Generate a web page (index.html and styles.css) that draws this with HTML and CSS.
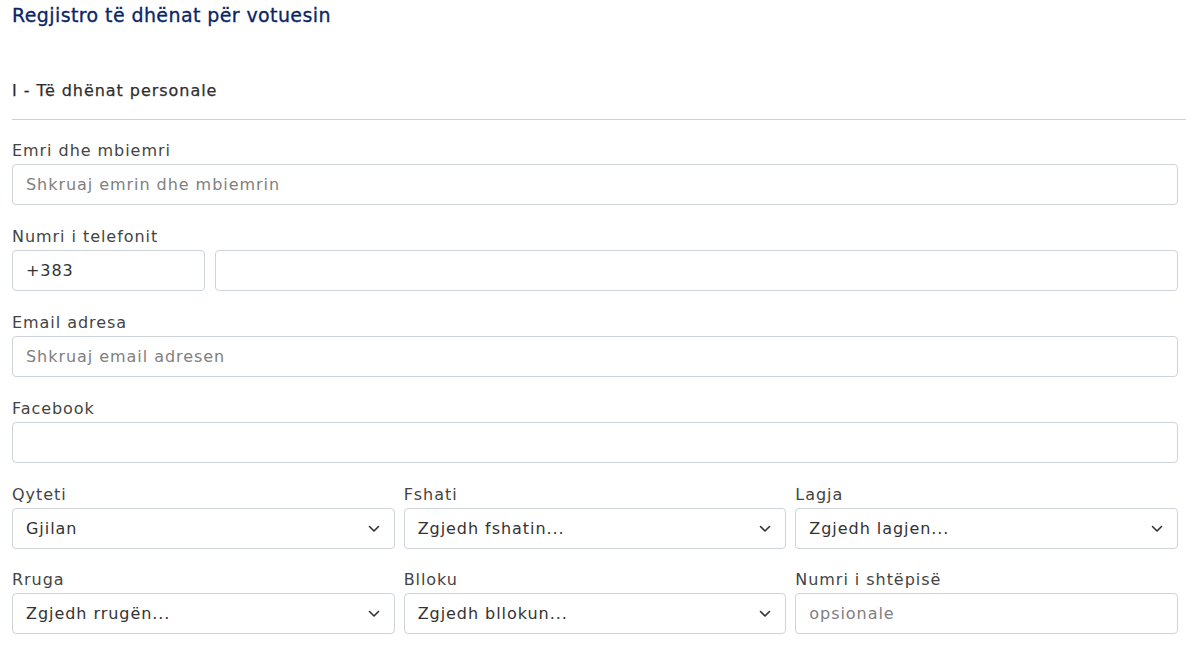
FILE: index.html
```html
<!DOCTYPE html>
<html lang="sq">
<head>
<meta charset="utf-8">
<title>Regjistro votuesin</title>
<link rel="stylesheet" href="styles.css">
</head>
<body>
<div class="page">
  <h1 class="title">Regjistro të dhënat për votuesin</h1>
  <h2 class="section">I - Të dhënat personale</h2>
  <hr class="divider">
  <form class="form">
    <div class="group">
      <label class="label">Emri dhe mbiemri</label>
      <div class="control placeholder">Shkruaj emrin dhe mbiemrin</div>
    </div>
    <div class="group">
      <label class="label">Numri i telefonit</label>
      <div class="phone">
        <div class="control code">+383</div>
        <div class="control"></div>
      </div>
    </div>
    <div class="group">
      <label class="label">Email adresa</label>
      <div class="control placeholder">Shkruaj email adresen</div>
    </div>
    <div class="group">
      <label class="label">Facebook</label>
      <div class="control"></div>
    </div>
    <div class="grid">
      <div class="group">
        <label class="label">Qyteti</label>
        <div class="control select"><span>Gjilan</span><svg class="chev" viewBox="0 0 12 8" width="12" height="8"><path d="M1.5 1.5 6 6l4.5-4.5" fill="none" stroke="#333" stroke-width="1.6" stroke-linecap="round" stroke-linejoin="round"/></svg></div>
      </div>
      <div class="group">
        <label class="label">Fshati</label>
        <div class="control select"><span>Zgjedh fshatin...</span><svg class="chev" viewBox="0 0 12 8" width="12" height="8"><path d="M1.5 1.5 6 6l4.5-4.5" fill="none" stroke="#333" stroke-width="1.6" stroke-linecap="round" stroke-linejoin="round"/></svg></div>
      </div>
      <div class="group">
        <label class="label">Lagja</label>
        <div class="control select"><span>Zgjedh lagjen...</span><svg class="chev" viewBox="0 0 12 8" width="12" height="8"><path d="M1.5 1.5 6 6l4.5-4.5" fill="none" stroke="#333" stroke-width="1.6" stroke-linecap="round" stroke-linejoin="round"/></svg></div>
      </div>
      <div class="group">
        <label class="label">Rruga</label>
        <div class="control select"><span>Zgjedh rrugën...</span><svg class="chev" viewBox="0 0 12 8" width="12" height="8"><path d="M1.5 1.5 6 6l4.5-4.5" fill="none" stroke="#333" stroke-width="1.6" stroke-linecap="round" stroke-linejoin="round"/></svg></div>
      </div>
      <div class="group">
        <label class="label">Blloku</label>
        <div class="control select"><span>Zgjedh bllokun...</span><svg class="chev" viewBox="0 0 12 8" width="12" height="8"><path d="M1.5 1.5 6 6l4.5-4.5" fill="none" stroke="#333" stroke-width="1.6" stroke-linecap="round" stroke-linejoin="round"/></svg></div>
      </div>
      <div class="group">
        <label class="label">Numri i shtëpisë</label>
        <div class="control placeholder">opsionale</div>
      </div>
    </div>
  </form>
</div>
</body>
</html>
```

FILE: styles.css
```css
* { box-sizing: border-box; }
html, body { margin: 0; padding: 0; background: #fff; }
body {
  font-family: "DejaVu Sans", "Open Sans", sans-serif;
  color: #3a3a3a;
  letter-spacing: 0.95px;
}
.page {
  padding: 3px 10px 0 12px;
}
.title {
  margin: 0;
  font-size: 19px;
  line-height: 24px;
  font-weight: normal;
  letter-spacing: 0.4px;
  color: #0a2566;
  -webkit-text-stroke: 0.3px #0a2566;
}
.section {
  margin: 52px 0 16px;
  font-size: 16px;
  line-height: 24px;
  font-weight: normal;
  color: #2e2e2e;
  -webkit-text-stroke: 0.25px #2e2e2e;
}
.divider {
  margin: 0;
  border: 0;
  border-top: 1px solid #d0d0d0;
}
.form {
  padding: 19px 8px 0 0;
}
.group {
  margin-bottom: 20px;
}
.label {
  display: block;
  font-size: 16px;
  line-height: 24px;
  margin-bottom: 1px;
  color: #444;
}
.control {
  height: 41px;
  border: 1px solid #ced4da;
  border-radius: 4px;
  padding: 0 13px;
  display: flex;
  align-items: center;
  font-size: 16px;
  color: #333;
  background: #fff;
}
.placeholder { color: #808080; }
.phone {
  display: grid;
  grid-template-columns: 193px 1fr;
  gap: 10px;
}
.grid {
  display: grid;
  grid-template-columns: repeat(3, 1fr);
  column-gap: 9px;
}
.grid .group { margin-bottom: 19px; }
.select {
  justify-content: space-between;
  padding-right: 14px;
}
.chev { flex: none; }
```
